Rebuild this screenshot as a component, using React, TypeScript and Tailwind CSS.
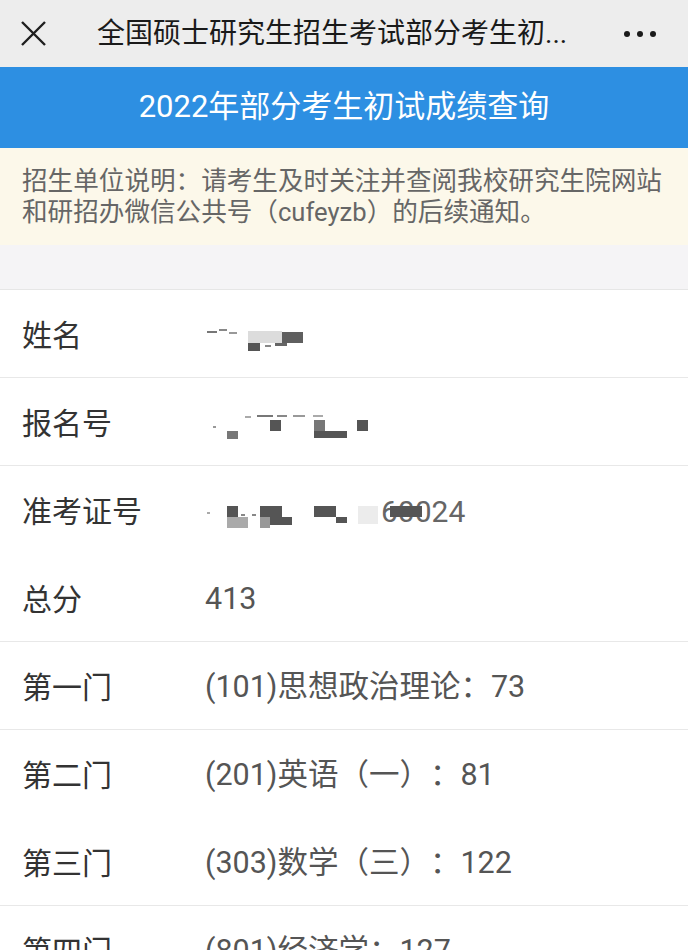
import type { ReactNode } from 'react';

const FONT = { fontFamily: '"Roboto", "Noto Sans CJK SC", sans-serif' };

type Block = [number, number, number, number, string];

// pixelated (redacted) values, coords relative to the value cell
const NAME_BLOCKS: Block[] = [
  [2, 16, 10, 2, '#777'],
  [14, 14, 8, 2, '#888'],
  [24, 17, 8, 2, '#999'],
  [43, 16, 34, 12, '#dcdcdc'],
  [77, 17, 21, 11, '#5f5f5f'],
  [43, 28, 12, 8, '#555'],
  [60, 30, 6, 2, '#888'],
  [70, 28, 12, 3, '#666'],
];

const REG_BLOCKS: Block[] = [
  [40, 13, 6, 2, '#aaa'],
  [52, 12, 16, 2, '#777'],
  [72, 12, 10, 2, '#888'],
  [88, 12, 12, 2, '#999'],
  [108, 12, 10, 2, '#aaa'],
  [65, 17, 11, 11, '#555'],
  [22, 28, 11, 8, '#777'],
  [109, 17, 11, 18, '#777'],
  [109, 28, 33, 7, '#555'],
  [152, 17, 11, 11, '#555'],
  [8, 23, 3, 2, '#999'],
];

const ID_BLOCKS: Block[] = [
  [22, 15, 11, 11, '#555'],
  [22, 26, 21, 11, '#aaa'],
  [55, 15, 22, 11, '#555'],
  [55, 26, 10, 11, '#999'],
  [65, 26, 22, 8, '#555'],
  [36, 23, 4, 2, '#888'],
  [47, 23, 4, 2, '#888'],
  [109, 15, 22, 11, '#555'],
  [131, 26, 11, 6, '#555'],
  [153, 15, 20, 18, '#ececec'],
  [185, 15, 32, 11, '#555'],
  [2, 21, 3, 2, '#aaa'],
];

function Mosaic({ blocks, children }: { blocks: Block[]; children?: ReactNode }) {
  return (
    <div className="relative h-[40px] w-[300px]">
      {children}
      <svg width="300" height="40" className="absolute left-0 top-0">
        {blocks.map(([x, y, w, h, c], i) => (
          <rect key={i} x={x} y={y} width={w} height={h} fill={c} />
        ))}
      </svg>
    </div>
  );
}

const rows: { label: string; value: ReactNode; line: boolean }[] = [
  { label: '姓名', value: <Mosaic blocks={NAME_BLOCKS} />, line: true },
  { label: '报名号', value: <Mosaic blocks={REG_BLOCKS} />, line: true },
  {
    label: '准考证号',
    value: (
      <Mosaic blocks={ID_BLOCKS}>
        <span className="absolute left-[176px] top-[2px] text-[30px] leading-[38px] text-[#666]">
          60024
        </span>
      </Mosaic>
    ),
    line: false,
  },
  { label: '总分', value: '413', line: true },
  { label: '第一门', value: '(101)思想政治理论：73', line: true },
  { label: '第二门', value: '(201)英语（一）：81', line: false },
  { label: '第三门', value: '(303)数学（三）：122', line: true },
  { label: '第四门', value: '(801)经济学：127', line: false },
];

export default function App() {
  return (
    <div
      className="h-[950px] w-[688px] overflow-hidden bg-white [text-spacing-trim:space-all]"
      style={FONT}
    >
      {/* title bar */}
      <div className="flex h-[67px] items-center bg-[#ededed] px-[20px]">
        <svg width="27" height="27" viewBox="0 0 27 27" className="mb-[1px]">
          <path d="M2 2 L25 25 M25 2 L2 25" stroke="#1f1f1f" strokeWidth="2.4" />
        </svg>
        <div className="ml-[50px] flex-1 truncate text-[28px] leading-[36px] text-[#1a1a1a]">
          全国硕士研究生招生考试部分考生初...
        </div>
        <div className="ml-[40px] mr-[12px] flex gap-[7px]">
          <span className="h-[6px] w-[6px] rounded-full bg-[#1a1a1a]" />
          <span className="h-[6px] w-[6px] rounded-full bg-[#1a1a1a]" />
          <span className="h-[6px] w-[6px] rounded-full bg-[#1a1a1a]" />
        </div>
      </div>

      {/* blue header */}
      <div className="flex h-[81px] items-center justify-center bg-[#2d8fe2] text-[31px] text-white">
        2022年部分考生初试成绩查询
      </div>

      {/* notice */}
      <div className="h-[97px] bg-[#fcf8ea] px-[22px] pt-[18px] text-[25.6px] leading-[31px] text-[#666]">
        招生单位说明：请考生及时关注并查阅我校研究生院网站和研招办微信公共号（cufeyzb）的后续通知。
      </div>

      <div className="h-[45px] border-b border-[#e6e6e6] bg-[#f5f4f6]" />

      {rows.map((r) => (
        <div
          key={r.label}
          className={
            'flex h-[88px] items-center px-[22px] pt-[3px] ' +
            (r.line ? 'border-b border-[#e8e8e8]' : 'border-b border-transparent')
          }
        >
          <div className="w-[183px] text-[30px] text-[#333]">{r.label}</div>
          <div className="text-[30.5px] text-[#555]">{r.value}</div>
        </div>
      ))}
    </div>
  );
}
